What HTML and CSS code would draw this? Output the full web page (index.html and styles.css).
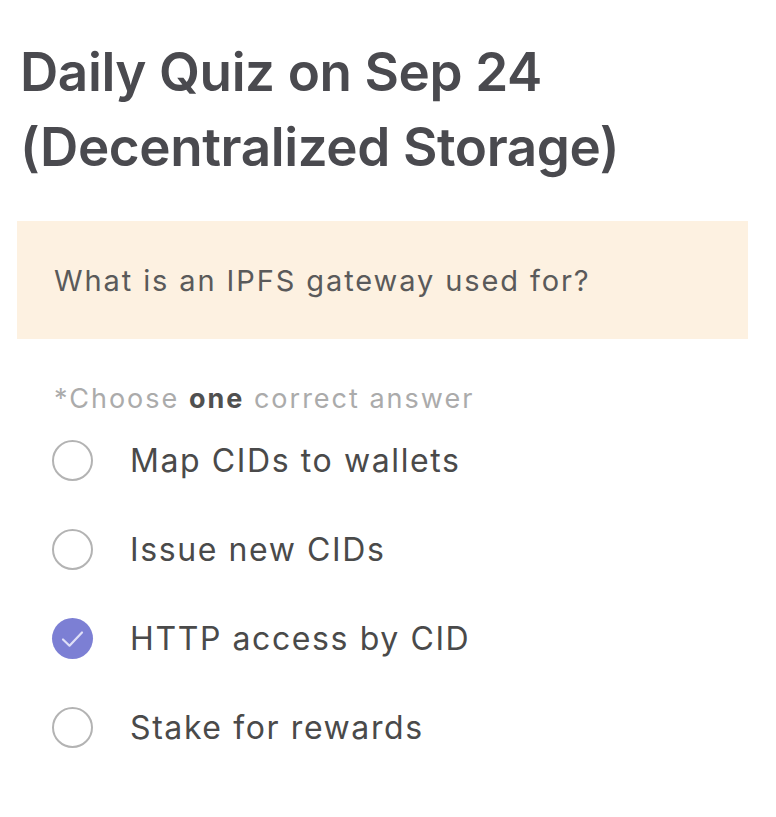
FILE: index.html
```html
<!DOCTYPE html>
<html lang="en">
<head>
<meta charset="utf-8">
<title>Daily Quiz</title>
<link rel="stylesheet" href="styles.css">
</head>
<body>
<main class="quiz">
  <h1 class="title">Daily Quiz on Sep 24<br>(Decentralized Storage)</h1>
  <div class="question">What is an IPFS gateway used for?</div>
  <p class="hint">*Choose <b>one</b> correct answer</p>
  <ul class="options">
    <li class="option"><span class="radio"></span><span class="label">Map CIDs to wallets</span></li>
    <li class="option"><span class="radio"></span><span class="label">Issue new CIDs</span></li>
    <li class="option"><span class="radio checked"><svg viewBox="0 0 41 41" width="41" height="41"><path d="M11 21.5l6.5 6.2L30 14.5" fill="none" stroke="#dfdff7" stroke-width="2.2" stroke-linecap="round" stroke-linejoin="round"/></svg></span><span class="label">HTTP access by CID</span></li>
    <li class="option"><span class="radio"></span><span class="label">Stake for rewards</span></li>
  </ul>
</main>
</body>
</html>
```
FILE: styles.css
```css
html, body {
  margin: 0;
  padding: 0;
  background: #ffffff;
}
.quiz {
  display: flex;
  flex-direction: column;
  font-family: Inter, "Noto Sans", sans-serif;
}
.title {
  margin: 35px 0 0 20px;
  font-size: 53px;
  line-height: 75px;
  font-weight: 600;
  color: #4a4a4f;
  letter-spacing: -0.4px;
}
.question {
  margin: 36px 28px 0 17px;
  height: 118px;
  display: flex;
  align-items: center;
  padding-left: 37px;
  background: #fdf1e1;
  font-size: 29px;
  color: #5a5a5a;
  letter-spacing: 1.9px;
}
.hint {
  margin: 45px 0 0 54px;
  font-size: 27px;
  line-height: 30px;
  color: #ababab;
  letter-spacing: 2px;
}
.hint b {
  font-weight: 700;
  color: #505050;
}
.options {
  list-style: none;
  margin: 2px 0 0 0;
  padding: 0;
  display: flex;
  flex-direction: column;
}
.option {
  height: 89px;
  display: flex;
  align-items: center;
  padding-left: 52px;
  gap: 37px;
}
.radio {
  box-sizing: border-box;
  width: 41px;
  height: 41px;
  border-radius: 50%;
  border: 2px solid #b3b3b3;
  display: flex;
  align-items: center;
  justify-content: center;
  flex: none;
}
.radio.checked {
  border: none;
  background: #7c7fd4;
}
.label {
  font-size: 32px;
  color: #4a4a4a;
  letter-spacing: 1.6px;
}
```
